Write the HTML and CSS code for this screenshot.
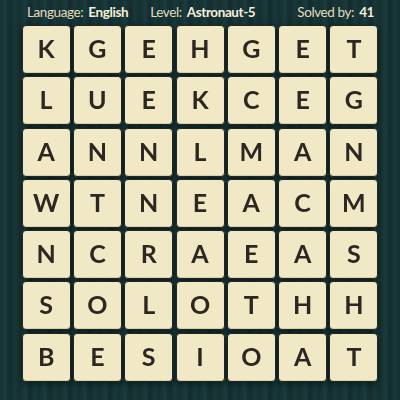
FILE: index.html
```html
<!DOCTYPE html>
<html lang="en">
  <head>
    <meta charset="UTF-8" />
    <title>Word Grid</title>
    <link rel="stylesheet" href="styles.css">
  </head>
  <body>
    <div class="board">
      <div class="info-bar">
        <span class="info lang">Language: <b>English</b></span>
        <span class="info level">Level: <b>Astronaut-5</b></span>
        <span class="info solved">Solved by: <b>41</b></span>
      </div>

      <div class="grid" id="grid"></div>
    </div>

    <script>
      // Letters of the puzzle, one string per row
      const rows = [
        "KGEHGET",
        "LUEKCEG",
        "ANNLMAN",
        "WTNEACM",
        "NCRAEAS",
        "SOLOTHH",
        "BESIOAT",
      ];

      const grid = document.getElementById("grid");

      rows.forEach((row) => {
        row.split("").forEach((letter) => {
          const tile = document.createElement("div");
          tile.classList.add("tile");
          tile.textContent = letter;
          grid.appendChild(tile);
        });
      });
    </script>
  </body>
</html>
```

FILE: styles.css
```css
/* General Styles */
body {
  margin: 0;
  padding: 0;
  width: 400px;
  height: 400px;
  overflow: hidden;
  font-family: Lato, "Open Sans", sans-serif;
  background-color: #163236;
  background-image: repeating-linear-gradient(
    90deg,
    #15302f 0px,
    #1a3b3e 5px,
    #132b2f 10px,
    #193739 15px,
    #15302f 20px
  );
}

.board {
  display: flex;
  flex-direction: column;
  align-items: center;
}

/* Top info line */
.info-bar {
  width: 348px;
  height: 25px;
  display: flex;
  align-items: center;
  color: #e2dcbf;
  font-size: 13.5px;
  letter-spacing: -0.4px;
  padding-bottom: 2px;
  padding-left: 1px;
  box-sizing: border-box;
}

.info b {
  color: #f5f0d9;
  font-weight: 700;
  margin-left: 2px;
}

.level {
  margin-left: 22px;
}

.solved {
  margin-left: auto;
}

/* Letter tiles */
.grid {
  display: grid;
  grid-template-columns: repeat(7, 49px);
  grid-auto-rows: 49px;
  gap: 2.3px;
  filter: drop-shadow(0 2px 3px rgba(0, 0, 0, 0.45));
}

.tile {
  display: flex;
  align-items: center;
  justify-content: center;
  background-color: #f1e9c6;
  border: 1px solid #1f2624;
  border-radius: 4px;
  box-sizing: border-box;
  box-shadow: inset 0 -1px 0 #d9cfa6;
  color: #2d2621;
  font-size: 25px;
  font-weight: 700;
  padding-bottom: 3px;
}
```
